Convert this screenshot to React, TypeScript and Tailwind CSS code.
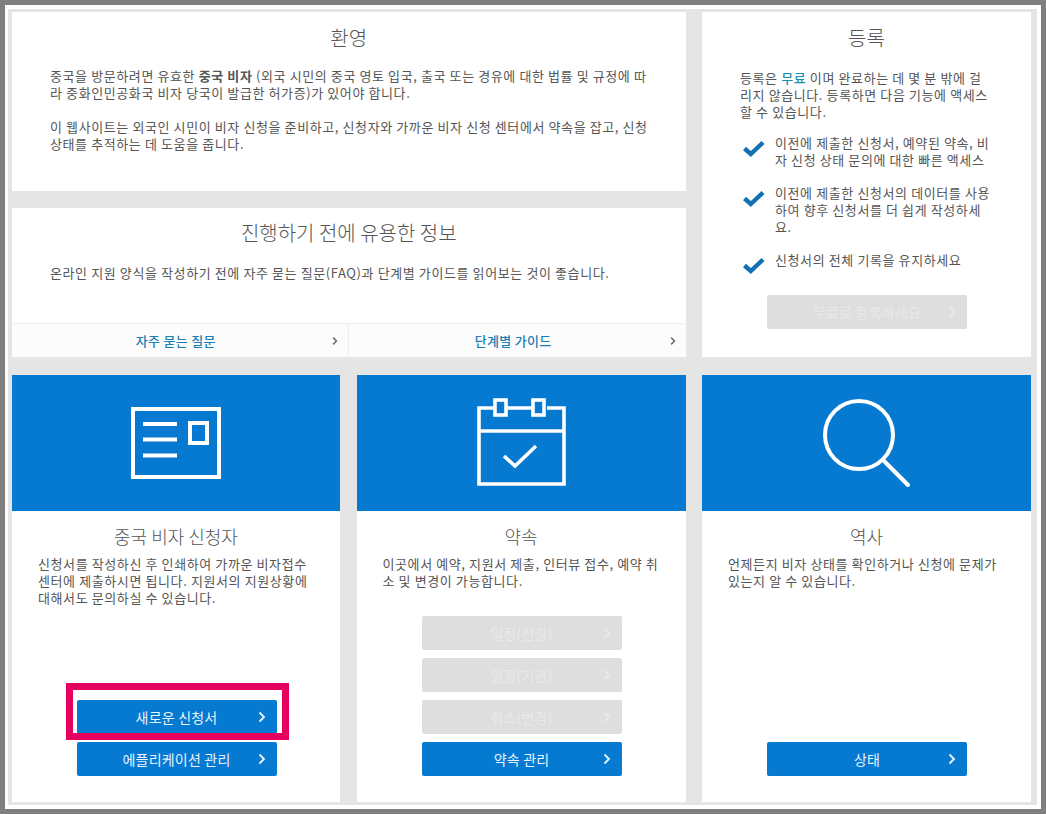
import React from "react";

function Chevron({ className = "" }: { className?: string }) {
  return (
    <svg width="8" height="12" viewBox="0 0 8 12" fill="none" className={className}>
      <path d="M1.5 1.5L6 6L1.5 10.5" stroke="currentColor" strokeWidth="1.9" />
    </svg>
  );
}

function Btn({ label, disabled = false }: { label: string; disabled?: boolean }) {
  return (
    <div
      className={
        "relative flex h-[34px] w-[200px] items-center justify-center rounded-[2px] text-[14px] tracking-[0.2px] " +
        (disabled ? "bg-[#dedede] text-[#e9e9e9]" : "bg-[#0679d1] text-[#e8f4fc]")
      }
    >
      <span>{label}</span>
      <Chevron className="absolute right-[11px] top-[11px]" />
    </div>
  );
}

function Check() {
  return (
    <svg width="24" height="18" viewBox="0 0 24 18" className="shrink-0">
      <path d="M2.5 9.5L8.8 15L21 3.5" fill="none" stroke="#1271b3" strokeWidth="4.4" />
    </svg>
  );
}

function Card({
  icon,
  title,
  text,
  buttons,
  overlay,
}: {
  icon: React.ReactNode;
  title: string;
  text: React.ReactNode;
  buttons: React.ReactNode;
  overlay?: React.ReactNode;
}) {
  return (
    <div className="relative flex flex-col bg-white">
      <div className="flex h-[136px] items-center justify-center bg-[#0679d1]">{icon}</div>
      <h3 className="mt-[11px] text-center text-[18px] font-light leading-[28px] tracking-normal text-[#555]">{title}</h3>
      <p className="mt-[5px] whitespace-nowrap px-[26px] leading-[17px]">{text}</p>
      <div className="mt-auto flex flex-col items-center gap-2 pb-[26px] pl-px">{buttons}</div>
      {overlay}
    </div>
  );
}

export default function App() {
  return (
    <div
      className="h-[814px] w-[1046px] border-[5px] border-[#7f7f7f] bg-white pb-[4px] pl-[3px] pr-[4px] pt-[4px] text-[13px] tracking-[0.6px] text-[#555]"
      style={{ fontFamily: '"Noto Sans CJK KR", "Noto Sans", sans-serif' }}
    >
      <div className="h-full bg-[#e5e5e5] pb-[3px] pl-[4px] pr-[6px] pt-[3px]">
        <div className="grid h-[790px] grid-cols-[328px_329px_329px] grid-rows-[345px_427px] gap-x-[16.5px] gap-y-[18px]">
          <div className="col-span-2 flex flex-col gap-[17px]">
            <section className="h-[179px] bg-white">
              <h2 className="pt-[11px] text-center text-[20px] font-light leading-[30px] tracking-normal text-[#555]">환영</h2>
              <div className="mt-[14px] whitespace-nowrap px-[38px] leading-[17px]">
                <p>
                  중국을 방문하려면 유효한 <b className="font-bold">중국 비자</b> (외국 시민의 중국 영토 입국, 출국 또는 경유에 대한 법률 및 규정에 따
                  <br />라 중화인민공화국 비자 당국이 발급한 허가증)가 있어야 합니다.
                </p>
                <p className="mt-[17px]">
                  이 웹사이트는 외국인 시민이 비자 신청을 준비하고, 신청자와 가까운 비자 신청 센터에서 약속을 잡고, 신청
                  <br />
                  상태를 추적하는 데 도움을 줍니다.
                </p>
              </div>
            </section>
            <section className="flex h-[149px] flex-col bg-white">
              <h2 className="pt-[10px] text-center text-[20px] font-light leading-[30px] tracking-normal text-[#555]">진행하기 전에 유용한 정보</h2>
              <p className="mt-[14px] whitespace-nowrap px-[38px] leading-[22px]">
                온라인 지원 양식을 작성하기 전에 자주 묻는 질문(FAQ)과 단계별 가이드를 읽어보는 것이 좋습니다.
              </p>
              <div className="mt-auto grid h-[34px] grid-cols-2 border-t border-[#f0f0f0] bg-[#fcfcfc] text-[13px] font-medium tracking-[0.3px] text-[#1a7fb5]">
                {["자주 묻는 질문", "단계별 가이드"].map((t, i) => (
                  <div key={t} className={"relative flex items-center justify-center pr-[8px] " + (i === 0 ? "border-r border-[#efefef]" : "")}>
                    {t}
                    <Chevron className="absolute right-[9px] top-[11px] scale-75 text-[#666]" />
                  </div>
                ))}
              </div>
            </section>
          </div>

          <section className="flex flex-col bg-white">
            <h2 className="pt-[11px] text-center text-[20px] font-light leading-[30px] tracking-normal text-[#555]">등록</h2>
            <p className="mt-[16px] whitespace-nowrap px-[38px] leading-[17px]">
              등록은 <span className="font-medium text-[#1a8fb0]">무료</span> 이며 완료하는 데 몇 분 밖에 걸
              <br />
              리지 않습니다. 등록하면 다음 기능에 액세스
              <br />할 수 있습니다.
            </p>
            <ul className="mt-[14px] flex flex-col gap-[16px] whitespace-nowrap px-[40px] leading-[17px]">
              <li className="flex gap-[9px]">
                <span className="mt-[5px]"><Check /></span>
                <span>이전에 제출한 신청서, 예약된 약속, 비<br />자 신청 상태 문의에 대한 빠른 액세스</span>
              </li>
              <li className="flex gap-[9px]">
                <span className="mt-[5px]"><Check /></span>
                <span>이전에 제출한 신청서의 데이터를 사용<br />하여 향후 신청서를 더 쉽게 작성하세<br />요.</span>
              </li>
              <li className="flex gap-[9px]">
                <span className="mt-[5px]"><Check /></span>
                <span>신청서의 전체 기록을 유지하세요</span>
              </li>
            </ul>
            <div className="mt-auto flex justify-center pb-[28px] pl-px">
              <Btn label="무료로 등록하세요" disabled />
            </div>
          </section>

          <Card
            icon={
              <svg width="90" height="72" viewBox="0 0 90 72" fill="none" stroke="#fff" strokeWidth="4">
                <rect x="2" y="2" width="86" height="68" />
                <path d="M12 17H46M12 32.5H46M12 48.5H46" />
                <rect x="59" y="16" width="17" height="20" />
              </svg>
            }
            title="중국 비자 신청자"
            text={
              <>
                신청서를 작성하신 후 인쇄하여 가까운 비자접수
                <br />
                센터에 제출하시면 됩니다. 지원서의 지원상황에
                <br />
                대해서도 문의하실 수 있습니다.
              </>
            }
            buttons={
              <>
                <Btn label="새로운 신청서" />
                <Btn label="에플리케이션 관리" />
              </>
            }
            overlay={
              <div className="absolute left-[54px] top-[308px] h-[57px] w-[223px] border-[7px] border-[#e6005f]" />
            }
          />
          <Card
            icon={
              <svg width="90" height="90" viewBox="0 0 90 90" fill="none" stroke="#fff" strokeWidth="3.6">
                <path d="M18 10H3V86H88V10H71M31 10H56" />
                <rect x="19" y="2" width="11" height="15" />
                <rect x="57" y="2" width="11" height="15" />
                <path d="M3 33H88" />
                <path d="M28 58L39 68L60 48" />
              </svg>
            }
            title="약속"
            text={
              <>
                이곳에서 예약, 지원서 제출, 인터뷰 접수, 예약 취
                <br />소 및 변경이 가능합니다.
              </>
            }
            buttons={
              <>
                <Btn label="일정(신청)" disabled />
                <Btn label="일정(기관)" disabled />
                <Btn label="취소(변경)" disabled />
                <Btn label="약속 관리" />
              </>
            }
          />
          <Card
            icon={
              <svg width="90" height="90" viewBox="0 0 90 90" fill="none" stroke="#fff" strokeWidth="4">
                <circle cx="37" cy="37" r="34" />
                <path d="M61 62L86 87" strokeLinecap="round" />
              </svg>
            }
            title="역사"
            text={
              <>
                언제든지 비자 상태를 확인하거나 신청에 문제가
                <br />
                있는지 알 수 있습니다.
              </>
            }
            buttons={<Btn label="상태" />}
          />
        </div>
      </div>
    </div>
  );
}
